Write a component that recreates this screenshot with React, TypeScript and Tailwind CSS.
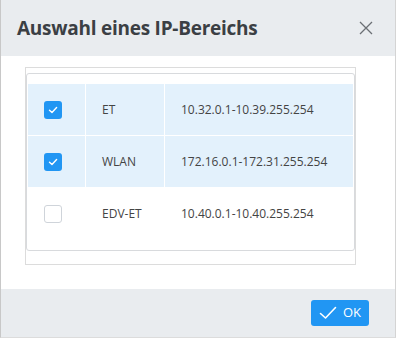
import React from "react";

const rows = [
  { checked: true, name: "ET", range: "10.32.0.1-10.39.255.254" },
  { checked: true, name: "WLAN", range: "172.16.0.1-172.31.255.254" },
  { checked: false, name: "EDV-ET", range: "10.40.0.1-10.40.255.254" },
];

function Check({ checked }: { checked: boolean }) {
  if (checked) {
    return (
      <div className="w-[18px] h-[18px] rounded-[3px] bg-[#2196f3] flex items-center justify-center">
        <svg width="12" height="12" viewBox="0 0 12 12" fill="none">
          <path d="M2.5 6.2 L5 8.5 L9.6 3.6" stroke="white" strokeWidth="1.4" strokeLinecap="round" strokeLinejoin="round" />
        </svg>
      </div>
    );
  }
  return <div className="w-[18px] h-[18px] rounded-[3px] bg-white border border-[#cfd4da]" />;
}

export default function App() {
  return (
    <div className="w-[397px] h-[339px] bg-white" style={{ fontFamily: '"Open Sans", "Noto Sans", sans-serif' }}>
      <div className="w-[396px] h-[338px] border-l border-r border-b border-l-[#c8c8c8] border-r-[#d4d4d4] border-b-[#dcdcdc] flex flex-col">
        <div className="h-[56px] bg-[#e9ecef] flex items-center justify-between pl-[16px] pr-[22px]">
          <div className="text-[19px] font-bold text-[#3b3f44] tracking-[-0.25px]">Auswahl eines IP-Bereichs</div>
          <svg width="14" height="14" viewBox="0 0 14 14" fill="none">
            <path d="M1 1 L13 13 M13 1 L1 13" stroke="#6b6f74" strokeWidth="1.3" />
          </svg>
        </div>
        <div className="flex-1 bg-white pt-[11px] pl-[24px]">
          <div className="w-[331px] h-[198px] border border-[#dcdcdc] pt-[5px]">
            <div className="w-[329px] border border-[#d8dadd] rounded-[3px] pt-[9px] pb-[10px]">
              <table className="border-separate border-spacing-[1px] w-[327px] text-[12px] text-[#444]">
                <tbody>
                  {rows.map((r) => (
                    <tr key={r.name} className={r.checked ? "bg-[#e3f1fc]" : "bg-white"}>
                      <td className="w-[57px] h-[51px] pl-[16px] p-0 align-middle">
                        <Check checked={r.checked} />
                      </td>
                      <td className="w-[78px] h-[51px] pl-[16px] align-middle">{r.name}</td>
                      <td className="h-[51px] pl-[16px] align-middle">{r.range}</td>
                    </tr>
                  ))}
                </tbody>
              </table>
            </div>
          </div>
        </div>
        <div className="h-[48px] bg-[#e9ecef] flex items-start justify-end pt-[11px] pr-[26px]">
          <button className="w-[58px] h-[26px] rounded-[3px] bg-[#2196f3] text-white text-[13px] flex items-center justify-center gap-[6px]">
            <svg width="18" height="14" viewBox="0 0 18 14" fill="none">
              <path d="M1.5 7.5 L6.5 12 L16.5 1.5" stroke="white" strokeWidth="1.6" strokeLinecap="round" strokeLinejoin="round" />
            </svg>
            <span>OK</span>
          </button>
        </div>
      </div>
    </div>
  );
}
